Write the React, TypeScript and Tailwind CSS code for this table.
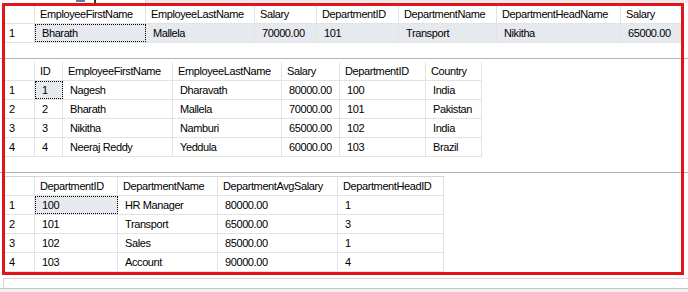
import clsx from 'clsx'

type Col = { name: string; w: string }
type Grid = {
  cols: Col[]
  rows: string[][]
  wholeRow?: boolean
}

const grids: Grid[] = [
  {
    cols: [
      { name: 'EmployeeFirstName', w: 'w-[111px]' },
      { name: 'EmployeeLastName', w: 'w-[109px]' },
      { name: 'Salary', w: 'w-[62px]' },
      { name: 'DepartmentID', w: 'w-[82px]' },
      { name: 'DepartmentName', w: 'w-[98px]' },
      { name: 'DepartmentHeadName', w: 'w-[124px]' },
      { name: 'Salary', w: 'w-[61px]' },
    ],
    rows: [['Bharath', 'Mallela', '70000.00', '101', 'Transport', 'Nikitha', '65000.00']],
    wholeRow: true,
  },
  {
    cols: [
      { name: 'ID', w: 'w-[28px]' },
      { name: 'EmployeeFirstName', w: 'w-[110px]' },
      { name: 'EmployeeLastName', w: 'w-[109px]' },
      { name: 'Salary', w: 'w-[58px]' },
      { name: 'DepartmentID', w: 'w-[86px]' },
      { name: 'Country', w: 'w-[56px]' },
    ],
    rows: [
      ['1', 'Nagesh', 'Dharavath', '80000.00', '100', 'India'],
      ['2', 'Bharath', 'Mallela', '70000.00', '101', 'Pakistan'],
      ['3', 'Nikitha', 'Namburi', '65000.00', '102', 'India'],
      ['4', 'Neeraj Reddy', 'Yeddula', '60000.00', '103', 'Brazil'],
    ],
  },
  {
    cols: [
      { name: 'DepartmentID', w: 'w-[83px]' },
      { name: 'DepartmentName', w: 'w-[100px]' },
      { name: 'DepartmentAvgSalary', w: 'w-[120px]' },
      { name: 'DepartmentHeadID', w: 'w-[106px]' },
    ],
    rows: [
      ['100', 'HR Manager', '80000.00', '1'],
      ['101', 'Transport', '65000.00', '3'],
      ['102', 'Sales', '85000.00', '1'],
      ['103', 'Account', '90000.00', '4'],
    ],
  },
]

function ResultGrid({ grid, topLine }: { grid: Grid; topLine?: boolean }) {
  return (
    <div className="ml-[3px] flex w-fit flex-col">
      <div className={clsx('flex h-[19px] border-b border-[#e3e3e3]', topLine && 'h-[20px] border-t border-t-[#d4d4d4]')}>
        <div className="h-full w-[32px] shrink-0 border-r border-[#e3e3e3]" />
        {grid.cols.map((c, i) => (
          <div key={i} className={clsx('h-full shrink-0 border-r border-[#e3e3e3] pl-[5px] leading-[18px]', c.w)}>
            {c.name}
          </div>
        ))}
      </div>
      {grid.rows.map((row, r) => (
        <div key={r} className="flex h-[19px] border-b border-[#e3e3e3]">
          <div className="h-full w-[32px] shrink-0 border-r border-[#e3e3e3] pl-[6px] leading-[18px]">{r + 1}</div>
          {row.map((v, i) => {
            const focus = r === 0 && i === 0
            const shaded = r === 0 && (grid.wholeRow || i === 0)
            return (
              <div
                key={i}
                className={clsx(
                  'h-full shrink-0 border-r border-[#e3e3e3] pl-[7px] leading-[18px] whitespace-nowrap',
                  grid.cols[i].w,
                  shaded && 'bg-[#e6e9ee]',
                  focus && 'outline-1 -outline-offset-1 outline-dotted outline-black'
                )}
              >
                {v}
              </div>
            )
          })}
        </div>
      ))}
    </div>
  )
}

export default function App() {
  return (
    <div className="relative flex h-[292px] w-[688px] flex-col overflow-hidden bg-white font-['Liberation_Sans',Arial,sans-serif] text-[11px] tracking-[-0.4px] text-black">
      {/* toolbar remnant */}
      <div className="flex h-[3px] shrink-0">
        <div className="relative w-[145px] shrink-0">
          <svg className="absolute left-[76px] top-0" width="22" height="3" viewBox="0 0 22 3">
            <rect x="0" y="0" width="9" height="2" fill="#6b7c93" />
            <rect x="2" y="0" width="5" height="1" fill="#3c7fd0" />
            <rect x="18" y="0" width="2" height="3" fill="#333" />
          </svg>
        </div>
        <div className="flex-1 border-l border-[#cfcfcf] bg-[#ebebeb]" />
      </div>

      <div className="h-[55px] shrink-0 pt-[2px]">
        <ResultGrid grid={grids[0]} />
      </div>
      <div className="h-px shrink-0 bg-[#b4b4b4]" />

      <div className="h-[113px] shrink-0 pt-[3px]">
        <ResultGrid grid={grids[1]} />
      </div>
      <div className="h-px shrink-0 bg-[#b4b4b4]" />

      <div className="h-[99px] shrink-0 pt-[3px]">
        <ResultGrid grid={grids[2]} topLine />
      </div>

      <div className="h-[6px] shrink-0" />
      <div className="ml-[3px] h-[10px] shrink-0 border-l border-t border-[#d4d4d4]" />
      <div className="h-px shrink-0 bg-[#c4c4c4]" />
      <div className="flex-1 bg-[#f0f0f0]" />

      {/* red annotation frame */}
      <div className="pointer-events-none absolute left-[2px] top-[3px] h-[272px] w-[682px] border-[3px] border-[#e2141b]" />
    </div>
  )
}
